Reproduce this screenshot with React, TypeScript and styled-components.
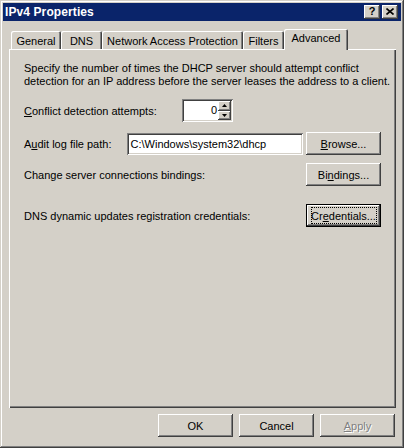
import styled, { createGlobalStyle } from "styled-components";

const GlobalStyle = createGlobalStyle`
  html, body {
    margin: 0;
    padding: 0;
    background: #d4d0c8;
  }
  body {
    font-family: "Liberation Sans", Arial, sans-serif;
    font-size: 11px;
    color: #000;
  }
  * {
    box-sizing: border-box;
  }
`;

const raisedEdge = `
  box-shadow: inset -1px -1px #404040, inset 1px 1px #ffffff,
    inset -2px -2px #808080, inset 2px 2px #d4d0c8;
`;

const sunkenEdge = `
  box-shadow: inset 1px 1px #808080, inset -1px -1px #ffffff,
    inset 2px 2px #404040, inset -2px -2px #d4d0c8;
`;

const tabs = [
  { label: "General", width: 50 },
  { label: "DNS", width: 41 },
  { label: "Network Access Protection", width: 141 },
  { label: "Filters", width: 41 },
  { label: "Advanced", width: 64, active: true },
];

const App = () => {
  return (
    <>
      <GlobalStyle />
      <Window>
        <TitleBar>
          <Title>IPv4 Properties</Title>
          <Captions>
            <CaptionButton>?</CaptionButton>
            <CaptionButton>
              <svg width="8" height="7" viewBox="0 0 8 7">
                <path d="M0.5 0.5 L7.5 6.5 M7.5 0.5 L0.5 6.5" stroke="#000" strokeWidth="1.6" />
              </svg>
            </CaptionButton>
          </Captions>
        </TitleBar>

        <Body>
          <TabStrip>
            {tabs.map((t) => (
              <Tab key={t.label} $w={t.width} $active={t.active}>
                {t.label}
              </Tab>
            ))}
          </TabStrip>

          <Panel>
            <Description>
              Specify the number of times the DHCP server should attempt conflict
              <br />
              detection for an IP address before the server leases the address to a client.
            </Description>

            <Row $mt={11}>
              <Label $w={158}>
                <u>C</u>onflict detection attempts:
              </Label>
              <Spin>
                <SpinValue>0</SpinValue>
                <SpinButtons>
                  <SpinButton>
                    <svg width="5" height="3" viewBox="0 0 5 3">
                      <path d="M2.5 0 L5 3 L0 3 Z" fill="#000" />
                    </svg>
                  </SpinButton>
                  <SpinButton>
                    <svg width="5" height="3" viewBox="0 0 5 3">
                      <path d="M0 0 L5 0 L2.5 3 Z" fill="#000" />
                    </svg>
                  </SpinButton>
                </SpinButtons>
              </Spin>
              <Spacer />
            </Row>

            <Row $mt={10}>
              <Label $w={99}>
                A<u>u</u>dit log file path:
              </Label>
              <TextBox>C:\Windows\system32\dhcp</TextBox>
              <Button>
                <u>B</u>rowse...
              </Button>
            </Row>

            <Row $mt={8}>
              <Label>Change server connections bindings:</Label>
              <Button>
                Bi<u>n</u>dings...
              </Button>
            </Row>

            <Row $mt={18}>
              <Label>DNS dynamic updates registration credentials:</Label>
              <Button $default>
                Cr<u>e</u>dentials...
              </Button>
            </Row>
          </Panel>

          <ButtonBar>
            <Button>OK</Button>
            <Button>Cancel</Button>
            <Button disabled>
              <u>A</u>pply
            </Button>
          </ButtonBar>
        </Body>
      </Window>
    </>
  );
};

export default App;

const Window = styled.div`
  width: 404px;
  height: 448px;
  padding: 3px;
  background: #d4d0c8;
  box-shadow: inset -1px -1px #404040, inset 1px 1px #d4d0c8,
    inset -2px -2px #808080, inset 2px 2px #ffffff;
  display: flex;
  flex-direction: column;
`;

const TitleBar = styled.div`
  height: 18px;
  background: #0a246a;
  display: flex;
  align-items: center;
  justify-content: space-between;
  padding: 0 3px 0 2px;
`;

const Title = styled.div`
  color: #fff;
  font-weight: bold;
  font-size: 12px;
  letter-spacing: 0.1px;
`;

const Captions = styled.div`
  display: flex;
  gap: 2px;
`;

const CaptionButton = styled.div`
  width: 16px;
  height: 14px;
  background: #d4d0c8;
  ${raisedEdge}
  display: flex;
  align-items: center;
  justify-content: center;
  font-weight: bold;
  font-size: 11px;
  line-height: 1;
  padding-bottom: 1px;
`;

const Body = styled.div`
  flex: 1;
  padding: 8px 5px 0 6px;
  display: flex;
  flex-direction: column;
`;

const TabStrip = styled.div`
  height: 20px;
  display: flex;
  align-items: flex-end;
  padding-left: 2px;
`;

const Tab = styled.div<{ $w: number; $active?: boolean }>`
  width: ${(p) => p.$w}px;
  height: ${(p) => (p.$active ? 21 : 18)}px;
  margin-bottom: ${(p) => (p.$active ? -1 : 0)}px;
  position: relative;
  z-index: ${(p) => (p.$active ? 1 : 0)};
  background: #d4d0c8;
  border-radius: 2px 2px 0 0;
  box-shadow: inset 1px 1px #ffffff, inset -1px 0 #404040, inset -2px 0 #808080;
  display: flex;
  align-items: center;
  justify-content: center;
  padding-top: ${(p) => (p.$active ? 0 : 2)}px;
  padding-bottom: ${(p) => (p.$active ? 3 : 0)}px;
  white-space: nowrap;
`;

const Panel = styled.div`
  height: 359px;
  background: #d4d0c8;
  box-shadow: inset 1px 1px #ffffff, inset -1px -1px #404040, inset -2px -2px #808080;
  padding: 13px 15px 0 15px;
  display: flex;
  flex-direction: column;
`;

const Description = styled.p`
  margin: 0;
  line-height: 13px;
  white-space: nowrap;
`;

const Row = styled.div<{ $mt: number }>`
  margin-top: ${(p) => p.$mt}px;
  height: 23px;
  display: flex;
  align-items: center;
  justify-content: space-between;
`;

const Label = styled.div<{ $w?: number }>`
  ${(p) => (p.$w ? `width: ${p.$w}px; flex: none;` : "flex: 1;")}
  white-space: nowrap;
  padding-top: 1px;
`;

const Spacer = styled.div`
  flex: 1;
`;

const Spin = styled.div`
  width: 51px;
  height: 23px;
  background: #fff;
  ${sunkenEdge}
  padding: 2px;
  display: flex;
`;

const SpinValue = styled.div`
  flex: 1;
  text-align: right;
  padding-right: 1px;
  line-height: 19px;
`;

const SpinButtons = styled.div`
  width: 13px;
  display: flex;
  flex-direction: column;
`;

const SpinButton = styled.div`
  flex: 1;
  background: #d4d0c8;
  ${raisedEdge}
  display: flex;
  align-items: center;
  justify-content: center;
`;

const TextBox = styled.div`
  width: 176px;
  height: 22px;
  background: #fff;
  ${sunkenEdge}
  padding: 0 4px;
  line-height: 22px;
  white-space: nowrap;
  flex: none;
`;

const Button = styled.button<{ $default?: boolean }>`
  width: 75px;
  height: 23px;
  flex: none;
  position: relative;
  border: none;
  padding: 0;
  background: #d4d0c8;
  font-family: "Liberation Sans", Arial, sans-serif;
  font-size: 11px;
  color: #000;
  ${(p) =>
    p.$default
      ? `box-shadow: inset 0 0 0 1px #000000, inset -2px -2px #404040, inset 2px 2px #ffffff,
          inset -3px -3px #808080, inset 3px 3px #d4d0c8;`
      : raisedEdge}

  ${(p) =>
    p.$default &&
    `&::after {
      content: "";
      position: absolute;
      top: 3px;
      bottom: 3px;
      left: 5px;
      right: 4px;
      border: 1px dotted #000;
    }`}

  &:disabled {
    color: #808080;
    text-shadow: 1px 1px 0 #ffffff;
  }
`;

const ButtonBar = styled.div`
  margin-top: 6px;
  display: flex;
  justify-content: flex-end;
  gap: 6px;
  padding-right: 1px;
`;
